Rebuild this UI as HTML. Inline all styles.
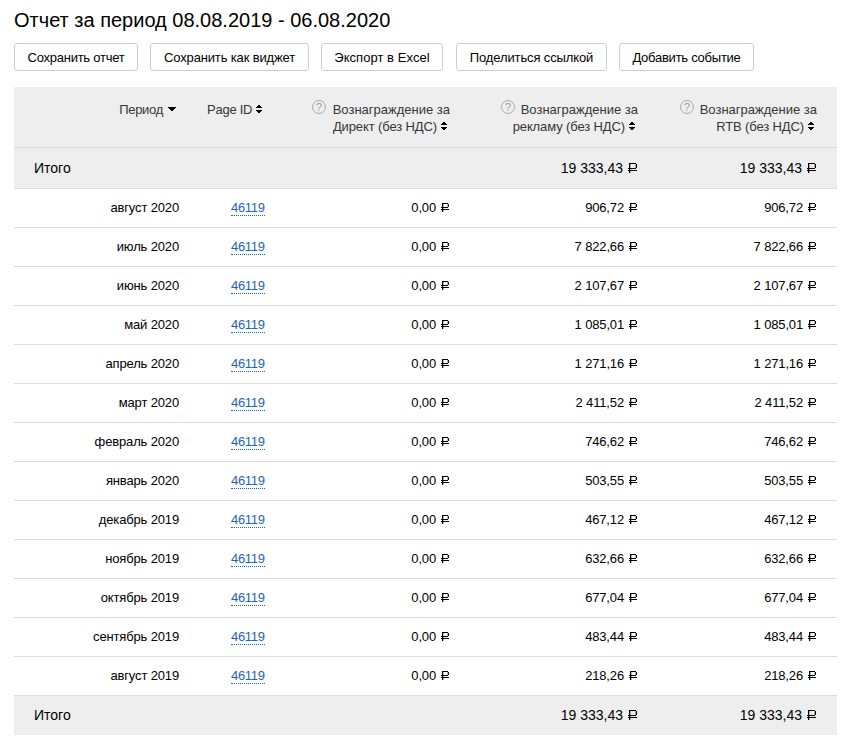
<!DOCTYPE html><html><head><meta charset="utf-8"><style>
*{box-sizing:border-box}
html,body{margin:0;padding:0;background:#fff;width:845px;height:745px;overflow:hidden}
body{font-family:"Liberation Sans",sans-serif;color:#000;position:relative}
h1{position:absolute;left:14px;top:8px;margin:0;font-size:20px;font-weight:normal;line-height:24px;white-space:nowrap}
.btn{position:absolute;top:43px;height:28px;border:1px solid #cfcfcf;border-radius:3px;background:#fff;font-size:13px;line-height:28px;text-align:center;white-space:nowrap;letter-spacing:-0.2px}
.tbl{position:absolute;left:14px;top:87px;width:823px}
.row{position:absolute;left:0;width:823px;border-bottom:1px solid #dcdcdc}
.hd{top:0;height:61px;background:#eee}
.tot{background:#eee}
.c{position:absolute;white-space:nowrap;font-size:13px;line-height:18px;letter-spacing:-0.15px}
.h{color:#363636;line-height:17px;top:14px;text-align:right;letter-spacing:0px}
.tri{display:inline-block;width:8px;height:4px;margin-left:5px;margin-right:0px;vertical-align:baseline;position:relative;top:-3px}
.sort{display:inline-block;width:6px;height:8px;position:relative;margin-left:4px;margin-right:3px;vertical-align:baseline;top:-1px}
.q{position:absolute;width:14px;height:14px}
a{letter-spacing:-0.3px;color:#1c64b8;text-decoration:none;border-bottom:1px dotted #1c64b8}
.rub{vertical-align:baseline}
i.sp{display:inline-block;width:5px}
</style></head><body>
<h1>Отчет за период 08.08.2019 - 06.08.2020</h1>
<div class="btn" style="left:14px;width:124px;letter-spacing:-0.25px">Сохранить отчет</div>
<div class="btn" style="left:150px;width:159px;letter-spacing:-0.15px">Сохранить как виджет</div>
<div class="btn" style="left:321px;width:122px;letter-spacing:0.05px">Экспорт в Excel</div>
<div class="btn" style="left:456px;width:151px;letter-spacing:-0.12px">Поделиться ссылкой</div>
<div class="btn" style="left:619px;width:135px;letter-spacing:-0.25px">Добавить событие</div>
<div class="tbl">
<div class="row hd">
<div class="c h" style="right:661px;letter-spacing:-0.3px">Период<svg class="tri" viewBox="0 0 8 4" shape-rendering="crispEdges"><path d="M0 0h8v1h-8zM1 1h6v1h-6zM2 2h4v1h-4zM3 3h2v1h-2z" fill="#000"/></svg></div>
<div class="c h" style="left:193px;text-align:left;letter-spacing:-0.25px">Page ID<svg class="sort" viewBox="0 0 6 8" shape-rendering="crispEdges"><path d="M2 0h2v1h-2zM1 1h4v1h-4zM0 2h6v1h-6zM0 5h6v1h-6zM1 6h4v1h-4zM2 7h2v1h-2z" fill="#000"/></svg></div>
<div class="q" style="left:298px;top:13px"><svg width="14" height="14" viewBox="0 0 14 14"><circle cx="7" cy="7" r="6.5" fill="none" stroke="#a9a9a9" stroke-width="1"/><text x="7" y="11" text-anchor="middle" font-family="Liberation Sans" font-size="11" fill="#9c9c9c">?</text></svg></div>
<div class="c h" style="right:387px">Вознаграждение за<br><span style="letter-spacing:-0.12px">Директ (без НДС)</span><svg class="sort" viewBox="0 0 6 8" shape-rendering="crispEdges"><path d="M2 0h2v1h-2zM1 1h4v1h-4zM0 2h6v1h-6zM0 5h6v1h-6zM1 6h4v1h-4zM2 7h2v1h-2z" fill="#000"/></svg></div>
<div class="q" style="left:487px;top:13px"><svg width="14" height="14" viewBox="0 0 14 14"><circle cx="7" cy="7" r="6.5" fill="none" stroke="#a9a9a9" stroke-width="1"/><text x="7" y="11" text-anchor="middle" font-family="Liberation Sans" font-size="11" fill="#9c9c9c">?</text></svg></div>
<div class="c h" style="right:199px">Вознаграждение за<br><span style="letter-spacing:-0.12px">рекламу (без НДС)</span><svg class="sort" viewBox="0 0 6 8" shape-rendering="crispEdges"><path d="M2 0h2v1h-2zM1 1h4v1h-4zM0 2h6v1h-6zM0 5h6v1h-6zM1 6h4v1h-4zM2 7h2v1h-2z" fill="#000"/></svg></div>
<div class="q" style="left:666px;top:13px"><svg width="14" height="14" viewBox="0 0 14 14"><circle cx="7" cy="7" r="6.5" fill="none" stroke="#a9a9a9" stroke-width="1"/><text x="7" y="11" text-anchor="middle" font-family="Liberation Sans" font-size="11" fill="#9c9c9c">?</text></svg></div>
<div class="c h" style="right:20px">Вознаграждение за<br><span style="letter-spacing:-0.12px">RTB (без НДС)</span><svg class="sort" viewBox="0 0 6 8" shape-rendering="crispEdges"><path d="M2 0h2v1h-2zM1 1h4v1h-4zM0 2h6v1h-6zM0 5h6v1h-6zM1 6h4v1h-4zM2 7h2v1h-2z" fill="#000"/></svg></div>
</div>
<div class="row tot" style="top:61px;height:41px;"><div class="c" style="left:20px;top:11px;font-size:14px;letter-spacing:0">Итого</div><div class="c" style="right:200px;top:11px;font-size:14px;letter-spacing:0">19 333,43<i class="sp"></i><svg class="rub" width="9" height="10" viewBox="0 0 9 10" shape-rendering="crispEdges"><path d="M1 0h7v1h-7zM8 1h1v4h-1zM0 5h8v1h-8zM0 7h9v1h-9zM1 0h1v10h-1z" fill="#000"/><path d="M2 1h1v4h-1zM7 1h1v4h-1zM2 6h1v1h-1zM2 8h1v2h-1z" fill="#000" fill-opacity="0.3"/></svg></div><div class="c" style="right:21px;top:11px;font-size:14px;letter-spacing:0">19 333,43<i class="sp"></i><svg class="rub" width="9" height="10" viewBox="0 0 9 10" shape-rendering="crispEdges"><path d="M1 0h7v1h-7zM8 1h1v4h-1zM0 5h8v1h-8zM0 7h9v1h-9zM1 0h1v10h-1z" fill="#000"/><path d="M2 1h1v4h-1zM7 1h1v4h-1zM2 6h1v1h-1zM2 8h1v2h-1z" fill="#000" fill-opacity="0.3"/></svg></div></div>
<div class="row" style="top:102px;height:39px"><div class="c" style="right:658px;top:10px">август 2020</div><div class="c" style="left:217px;top:10px"><a>46119</a></div><div class="c" style="right:388px;top:10px">0,00<i class="sp"></i><svg class="rub" width="8" height="9" viewBox="0 0 8 9" shape-rendering="crispEdges"><path d="M1 0h6v1h-6zM7 1h1v3h-1zM0 4h7v1h-7zM0 6h8v1h-8zM1 0h1v9h-1z" fill="#000"/><path d="M2 1h1v3h-1zM6 1h1v3h-1zM2 5h1v1h-1zM2 7h1v2h-1z" fill="#000" fill-opacity="0.3"/></svg></div><div class="c" style="right:200px;top:10px">906,72<i class="sp"></i><svg class="rub" width="8" height="9" viewBox="0 0 8 9" shape-rendering="crispEdges"><path d="M1 0h6v1h-6zM7 1h1v3h-1zM0 4h7v1h-7zM0 6h8v1h-8zM1 0h1v9h-1z" fill="#000"/><path d="M2 1h1v3h-1zM6 1h1v3h-1zM2 5h1v1h-1zM2 7h1v2h-1z" fill="#000" fill-opacity="0.3"/></svg></div><div class="c" style="right:21px;top:10px">906,72<i class="sp"></i><svg class="rub" width="8" height="9" viewBox="0 0 8 9" shape-rendering="crispEdges"><path d="M1 0h6v1h-6zM7 1h1v3h-1zM0 4h7v1h-7zM0 6h8v1h-8zM1 0h1v9h-1z" fill="#000"/><path d="M2 1h1v3h-1zM6 1h1v3h-1zM2 5h1v1h-1zM2 7h1v2h-1z" fill="#000" fill-opacity="0.3"/></svg></div></div>
<div class="row" style="top:141px;height:39px"><div class="c" style="right:658px;top:10px">июль 2020</div><div class="c" style="left:217px;top:10px"><a>46119</a></div><div class="c" style="right:388px;top:10px">0,00<i class="sp"></i><svg class="rub" width="8" height="9" viewBox="0 0 8 9" shape-rendering="crispEdges"><path d="M1 0h6v1h-6zM7 1h1v3h-1zM0 4h7v1h-7zM0 6h8v1h-8zM1 0h1v9h-1z" fill="#000"/><path d="M2 1h1v3h-1zM6 1h1v3h-1zM2 5h1v1h-1zM2 7h1v2h-1z" fill="#000" fill-opacity="0.3"/></svg></div><div class="c" style="right:200px;top:10px">7 822,66<i class="sp"></i><svg class="rub" width="8" height="9" viewBox="0 0 8 9" shape-rendering="crispEdges"><path d="M1 0h6v1h-6zM7 1h1v3h-1zM0 4h7v1h-7zM0 6h8v1h-8zM1 0h1v9h-1z" fill="#000"/><path d="M2 1h1v3h-1zM6 1h1v3h-1zM2 5h1v1h-1zM2 7h1v2h-1z" fill="#000" fill-opacity="0.3"/></svg></div><div class="c" style="right:21px;top:10px">7 822,66<i class="sp"></i><svg class="rub" width="8" height="9" viewBox="0 0 8 9" shape-rendering="crispEdges"><path d="M1 0h6v1h-6zM7 1h1v3h-1zM0 4h7v1h-7zM0 6h8v1h-8zM1 0h1v9h-1z" fill="#000"/><path d="M2 1h1v3h-1zM6 1h1v3h-1zM2 5h1v1h-1zM2 7h1v2h-1z" fill="#000" fill-opacity="0.3"/></svg></div></div>
<div class="row" style="top:180px;height:39px"><div class="c" style="right:658px;top:10px">июнь 2020</div><div class="c" style="left:217px;top:10px"><a>46119</a></div><div class="c" style="right:388px;top:10px">0,00<i class="sp"></i><svg class="rub" width="8" height="9" viewBox="0 0 8 9" shape-rendering="crispEdges"><path d="M1 0h6v1h-6zM7 1h1v3h-1zM0 4h7v1h-7zM0 6h8v1h-8zM1 0h1v9h-1z" fill="#000"/><path d="M2 1h1v3h-1zM6 1h1v3h-1zM2 5h1v1h-1zM2 7h1v2h-1z" fill="#000" fill-opacity="0.3"/></svg></div><div class="c" style="right:200px;top:10px">2 107,67<i class="sp"></i><svg class="rub" width="8" height="9" viewBox="0 0 8 9" shape-rendering="crispEdges"><path d="M1 0h6v1h-6zM7 1h1v3h-1zM0 4h7v1h-7zM0 6h8v1h-8zM1 0h1v9h-1z" fill="#000"/><path d="M2 1h1v3h-1zM6 1h1v3h-1zM2 5h1v1h-1zM2 7h1v2h-1z" fill="#000" fill-opacity="0.3"/></svg></div><div class="c" style="right:21px;top:10px">2 107,67<i class="sp"></i><svg class="rub" width="8" height="9" viewBox="0 0 8 9" shape-rendering="crispEdges"><path d="M1 0h6v1h-6zM7 1h1v3h-1zM0 4h7v1h-7zM0 6h8v1h-8zM1 0h1v9h-1z" fill="#000"/><path d="M2 1h1v3h-1zM6 1h1v3h-1zM2 5h1v1h-1zM2 7h1v2h-1z" fill="#000" fill-opacity="0.3"/></svg></div></div>
<div class="row" style="top:219px;height:39px"><div class="c" style="right:658px;top:10px">май 2020</div><div class="c" style="left:217px;top:10px"><a>46119</a></div><div class="c" style="right:388px;top:10px">0,00<i class="sp"></i><svg class="rub" width="8" height="9" viewBox="0 0 8 9" shape-rendering="crispEdges"><path d="M1 0h6v1h-6zM7 1h1v3h-1zM0 4h7v1h-7zM0 6h8v1h-8zM1 0h1v9h-1z" fill="#000"/><path d="M2 1h1v3h-1zM6 1h1v3h-1zM2 5h1v1h-1zM2 7h1v2h-1z" fill="#000" fill-opacity="0.3"/></svg></div><div class="c" style="right:200px;top:10px">1 085,01<i class="sp"></i><svg class="rub" width="8" height="9" viewBox="0 0 8 9" shape-rendering="crispEdges"><path d="M1 0h6v1h-6zM7 1h1v3h-1zM0 4h7v1h-7zM0 6h8v1h-8zM1 0h1v9h-1z" fill="#000"/><path d="M2 1h1v3h-1zM6 1h1v3h-1zM2 5h1v1h-1zM2 7h1v2h-1z" fill="#000" fill-opacity="0.3"/></svg></div><div class="c" style="right:21px;top:10px">1 085,01<i class="sp"></i><svg class="rub" width="8" height="9" viewBox="0 0 8 9" shape-rendering="crispEdges"><path d="M1 0h6v1h-6zM7 1h1v3h-1zM0 4h7v1h-7zM0 6h8v1h-8zM1 0h1v9h-1z" fill="#000"/><path d="M2 1h1v3h-1zM6 1h1v3h-1zM2 5h1v1h-1zM2 7h1v2h-1z" fill="#000" fill-opacity="0.3"/></svg></div></div>
<div class="row" style="top:258px;height:39px"><div class="c" style="right:658px;top:10px">апрель 2020</div><div class="c" style="left:217px;top:10px"><a>46119</a></div><div class="c" style="right:388px;top:10px">0,00<i class="sp"></i><svg class="rub" width="8" height="9" viewBox="0 0 8 9" shape-rendering="crispEdges"><path d="M1 0h6v1h-6zM7 1h1v3h-1zM0 4h7v1h-7zM0 6h8v1h-8zM1 0h1v9h-1z" fill="#000"/><path d="M2 1h1v3h-1zM6 1h1v3h-1zM2 5h1v1h-1zM2 7h1v2h-1z" fill="#000" fill-opacity="0.3"/></svg></div><div class="c" style="right:200px;top:10px">1 271,16<i class="sp"></i><svg class="rub" width="8" height="9" viewBox="0 0 8 9" shape-rendering="crispEdges"><path d="M1 0h6v1h-6zM7 1h1v3h-1zM0 4h7v1h-7zM0 6h8v1h-8zM1 0h1v9h-1z" fill="#000"/><path d="M2 1h1v3h-1zM6 1h1v3h-1zM2 5h1v1h-1zM2 7h1v2h-1z" fill="#000" fill-opacity="0.3"/></svg></div><div class="c" style="right:21px;top:10px">1 271,16<i class="sp"></i><svg class="rub" width="8" height="9" viewBox="0 0 8 9" shape-rendering="crispEdges"><path d="M1 0h6v1h-6zM7 1h1v3h-1zM0 4h7v1h-7zM0 6h8v1h-8zM1 0h1v9h-1z" fill="#000"/><path d="M2 1h1v3h-1zM6 1h1v3h-1zM2 5h1v1h-1zM2 7h1v2h-1z" fill="#000" fill-opacity="0.3"/></svg></div></div>
<div class="row" style="top:297px;height:39px"><div class="c" style="right:658px;top:10px">март 2020</div><div class="c" style="left:217px;top:10px"><a>46119</a></div><div class="c" style="right:388px;top:10px">0,00<i class="sp"></i><svg class="rub" width="8" height="9" viewBox="0 0 8 9" shape-rendering="crispEdges"><path d="M1 0h6v1h-6zM7 1h1v3h-1zM0 4h7v1h-7zM0 6h8v1h-8zM1 0h1v9h-1z" fill="#000"/><path d="M2 1h1v3h-1zM6 1h1v3h-1zM2 5h1v1h-1zM2 7h1v2h-1z" fill="#000" fill-opacity="0.3"/></svg></div><div class="c" style="right:200px;top:10px">2 411,52<i class="sp"></i><svg class="rub" width="8" height="9" viewBox="0 0 8 9" shape-rendering="crispEdges"><path d="M1 0h6v1h-6zM7 1h1v3h-1zM0 4h7v1h-7zM0 6h8v1h-8zM1 0h1v9h-1z" fill="#000"/><path d="M2 1h1v3h-1zM6 1h1v3h-1zM2 5h1v1h-1zM2 7h1v2h-1z" fill="#000" fill-opacity="0.3"/></svg></div><div class="c" style="right:21px;top:10px">2 411,52<i class="sp"></i><svg class="rub" width="8" height="9" viewBox="0 0 8 9" shape-rendering="crispEdges"><path d="M1 0h6v1h-6zM7 1h1v3h-1zM0 4h7v1h-7zM0 6h8v1h-8zM1 0h1v9h-1z" fill="#000"/><path d="M2 1h1v3h-1zM6 1h1v3h-1zM2 5h1v1h-1zM2 7h1v2h-1z" fill="#000" fill-opacity="0.3"/></svg></div></div>
<div class="row" style="top:336px;height:39px"><div class="c" style="right:658px;top:10px">февраль 2020</div><div class="c" style="left:217px;top:10px"><a>46119</a></div><div class="c" style="right:388px;top:10px">0,00<i class="sp"></i><svg class="rub" width="8" height="9" viewBox="0 0 8 9" shape-rendering="crispEdges"><path d="M1 0h6v1h-6zM7 1h1v3h-1zM0 4h7v1h-7zM0 6h8v1h-8zM1 0h1v9h-1z" fill="#000"/><path d="M2 1h1v3h-1zM6 1h1v3h-1zM2 5h1v1h-1zM2 7h1v2h-1z" fill="#000" fill-opacity="0.3"/></svg></div><div class="c" style="right:200px;top:10px">746,62<i class="sp"></i><svg class="rub" width="8" height="9" viewBox="0 0 8 9" shape-rendering="crispEdges"><path d="M1 0h6v1h-6zM7 1h1v3h-1zM0 4h7v1h-7zM0 6h8v1h-8zM1 0h1v9h-1z" fill="#000"/><path d="M2 1h1v3h-1zM6 1h1v3h-1zM2 5h1v1h-1zM2 7h1v2h-1z" fill="#000" fill-opacity="0.3"/></svg></div><div class="c" style="right:21px;top:10px">746,62<i class="sp"></i><svg class="rub" width="8" height="9" viewBox="0 0 8 9" shape-rendering="crispEdges"><path d="M1 0h6v1h-6zM7 1h1v3h-1zM0 4h7v1h-7zM0 6h8v1h-8zM1 0h1v9h-1z" fill="#000"/><path d="M2 1h1v3h-1zM6 1h1v3h-1zM2 5h1v1h-1zM2 7h1v2h-1z" fill="#000" fill-opacity="0.3"/></svg></div></div>
<div class="row" style="top:375px;height:39px"><div class="c" style="right:658px;top:10px">январь 2020</div><div class="c" style="left:217px;top:10px"><a>46119</a></div><div class="c" style="right:388px;top:10px">0,00<i class="sp"></i><svg class="rub" width="8" height="9" viewBox="0 0 8 9" shape-rendering="crispEdges"><path d="M1 0h6v1h-6zM7 1h1v3h-1zM0 4h7v1h-7zM0 6h8v1h-8zM1 0h1v9h-1z" fill="#000"/><path d="M2 1h1v3h-1zM6 1h1v3h-1zM2 5h1v1h-1zM2 7h1v2h-1z" fill="#000" fill-opacity="0.3"/></svg></div><div class="c" style="right:200px;top:10px">503,55<i class="sp"></i><svg class="rub" width="8" height="9" viewBox="0 0 8 9" shape-rendering="crispEdges"><path d="M1 0h6v1h-6zM7 1h1v3h-1zM0 4h7v1h-7zM0 6h8v1h-8zM1 0h1v9h-1z" fill="#000"/><path d="M2 1h1v3h-1zM6 1h1v3h-1zM2 5h1v1h-1zM2 7h1v2h-1z" fill="#000" fill-opacity="0.3"/></svg></div><div class="c" style="right:21px;top:10px">503,55<i class="sp"></i><svg class="rub" width="8" height="9" viewBox="0 0 8 9" shape-rendering="crispEdges"><path d="M1 0h6v1h-6zM7 1h1v3h-1zM0 4h7v1h-7zM0 6h8v1h-8zM1 0h1v9h-1z" fill="#000"/><path d="M2 1h1v3h-1zM6 1h1v3h-1zM2 5h1v1h-1zM2 7h1v2h-1z" fill="#000" fill-opacity="0.3"/></svg></div></div>
<div class="row" style="top:414px;height:39px"><div class="c" style="right:658px;top:10px">декабрь 2019</div><div class="c" style="left:217px;top:10px"><a>46119</a></div><div class="c" style="right:388px;top:10px">0,00<i class="sp"></i><svg class="rub" width="8" height="9" viewBox="0 0 8 9" shape-rendering="crispEdges"><path d="M1 0h6v1h-6zM7 1h1v3h-1zM0 4h7v1h-7zM0 6h8v1h-8zM1 0h1v9h-1z" fill="#000"/><path d="M2 1h1v3h-1zM6 1h1v3h-1zM2 5h1v1h-1zM2 7h1v2h-1z" fill="#000" fill-opacity="0.3"/></svg></div><div class="c" style="right:200px;top:10px">467,12<i class="sp"></i><svg class="rub" width="8" height="9" viewBox="0 0 8 9" shape-rendering="crispEdges"><path d="M1 0h6v1h-6zM7 1h1v3h-1zM0 4h7v1h-7zM0 6h8v1h-8zM1 0h1v9h-1z" fill="#000"/><path d="M2 1h1v3h-1zM6 1h1v3h-1zM2 5h1v1h-1zM2 7h1v2h-1z" fill="#000" fill-opacity="0.3"/></svg></div><div class="c" style="right:21px;top:10px">467,12<i class="sp"></i><svg class="rub" width="8" height="9" viewBox="0 0 8 9" shape-rendering="crispEdges"><path d="M1 0h6v1h-6zM7 1h1v3h-1zM0 4h7v1h-7zM0 6h8v1h-8zM1 0h1v9h-1z" fill="#000"/><path d="M2 1h1v3h-1zM6 1h1v3h-1zM2 5h1v1h-1zM2 7h1v2h-1z" fill="#000" fill-opacity="0.3"/></svg></div></div>
<div class="row" style="top:453px;height:39px"><div class="c" style="right:658px;top:10px">ноябрь 2019</div><div class="c" style="left:217px;top:10px"><a>46119</a></div><div class="c" style="right:388px;top:10px">0,00<i class="sp"></i><svg class="rub" width="8" height="9" viewBox="0 0 8 9" shape-rendering="crispEdges"><path d="M1 0h6v1h-6zM7 1h1v3h-1zM0 4h7v1h-7zM0 6h8v1h-8zM1 0h1v9h-1z" fill="#000"/><path d="M2 1h1v3h-1zM6 1h1v3h-1zM2 5h1v1h-1zM2 7h1v2h-1z" fill="#000" fill-opacity="0.3"/></svg></div><div class="c" style="right:200px;top:10px">632,66<i class="sp"></i><svg class="rub" width="8" height="9" viewBox="0 0 8 9" shape-rendering="crispEdges"><path d="M1 0h6v1h-6zM7 1h1v3h-1zM0 4h7v1h-7zM0 6h8v1h-8zM1 0h1v9h-1z" fill="#000"/><path d="M2 1h1v3h-1zM6 1h1v3h-1zM2 5h1v1h-1zM2 7h1v2h-1z" fill="#000" fill-opacity="0.3"/></svg></div><div class="c" style="right:21px;top:10px">632,66<i class="sp"></i><svg class="rub" width="8" height="9" viewBox="0 0 8 9" shape-rendering="crispEdges"><path d="M1 0h6v1h-6zM7 1h1v3h-1zM0 4h7v1h-7zM0 6h8v1h-8zM1 0h1v9h-1z" fill="#000"/><path d="M2 1h1v3h-1zM6 1h1v3h-1zM2 5h1v1h-1zM2 7h1v2h-1z" fill="#000" fill-opacity="0.3"/></svg></div></div>
<div class="row" style="top:492px;height:39px"><div class="c" style="right:658px;top:10px">октябрь 2019</div><div class="c" style="left:217px;top:10px"><a>46119</a></div><div class="c" style="right:388px;top:10px">0,00<i class="sp"></i><svg class="rub" width="8" height="9" viewBox="0 0 8 9" shape-rendering="crispEdges"><path d="M1 0h6v1h-6zM7 1h1v3h-1zM0 4h7v1h-7zM0 6h8v1h-8zM1 0h1v9h-1z" fill="#000"/><path d="M2 1h1v3h-1zM6 1h1v3h-1zM2 5h1v1h-1zM2 7h1v2h-1z" fill="#000" fill-opacity="0.3"/></svg></div><div class="c" style="right:200px;top:10px">677,04<i class="sp"></i><svg class="rub" width="8" height="9" viewBox="0 0 8 9" shape-rendering="crispEdges"><path d="M1 0h6v1h-6zM7 1h1v3h-1zM0 4h7v1h-7zM0 6h8v1h-8zM1 0h1v9h-1z" fill="#000"/><path d="M2 1h1v3h-1zM6 1h1v3h-1zM2 5h1v1h-1zM2 7h1v2h-1z" fill="#000" fill-opacity="0.3"/></svg></div><div class="c" style="right:21px;top:10px">677,04<i class="sp"></i><svg class="rub" width="8" height="9" viewBox="0 0 8 9" shape-rendering="crispEdges"><path d="M1 0h6v1h-6zM7 1h1v3h-1zM0 4h7v1h-7zM0 6h8v1h-8zM1 0h1v9h-1z" fill="#000"/><path d="M2 1h1v3h-1zM6 1h1v3h-1zM2 5h1v1h-1zM2 7h1v2h-1z" fill="#000" fill-opacity="0.3"/></svg></div></div>
<div class="row" style="top:531px;height:39px"><div class="c" style="right:658px;top:10px">сентябрь 2019</div><div class="c" style="left:217px;top:10px"><a>46119</a></div><div class="c" style="right:388px;top:10px">0,00<i class="sp"></i><svg class="rub" width="8" height="9" viewBox="0 0 8 9" shape-rendering="crispEdges"><path d="M1 0h6v1h-6zM7 1h1v3h-1zM0 4h7v1h-7zM0 6h8v1h-8zM1 0h1v9h-1z" fill="#000"/><path d="M2 1h1v3h-1zM6 1h1v3h-1zM2 5h1v1h-1zM2 7h1v2h-1z" fill="#000" fill-opacity="0.3"/></svg></div><div class="c" style="right:200px;top:10px">483,44<i class="sp"></i><svg class="rub" width="8" height="9" viewBox="0 0 8 9" shape-rendering="crispEdges"><path d="M1 0h6v1h-6zM7 1h1v3h-1zM0 4h7v1h-7zM0 6h8v1h-8zM1 0h1v9h-1z" fill="#000"/><path d="M2 1h1v3h-1zM6 1h1v3h-1zM2 5h1v1h-1zM2 7h1v2h-1z" fill="#000" fill-opacity="0.3"/></svg></div><div class="c" style="right:21px;top:10px">483,44<i class="sp"></i><svg class="rub" width="8" height="9" viewBox="0 0 8 9" shape-rendering="crispEdges"><path d="M1 0h6v1h-6zM7 1h1v3h-1zM0 4h7v1h-7zM0 6h8v1h-8zM1 0h1v9h-1z" fill="#000"/><path d="M2 1h1v3h-1zM6 1h1v3h-1zM2 5h1v1h-1zM2 7h1v2h-1z" fill="#000" fill-opacity="0.3"/></svg></div></div>
<div class="row" style="top:570px;height:39px"><div class="c" style="right:658px;top:10px">август 2019</div><div class="c" style="left:217px;top:10px"><a>46119</a></div><div class="c" style="right:388px;top:10px">0,00<i class="sp"></i><svg class="rub" width="8" height="9" viewBox="0 0 8 9" shape-rendering="crispEdges"><path d="M1 0h6v1h-6zM7 1h1v3h-1zM0 4h7v1h-7zM0 6h8v1h-8zM1 0h1v9h-1z" fill="#000"/><path d="M2 1h1v3h-1zM6 1h1v3h-1zM2 5h1v1h-1zM2 7h1v2h-1z" fill="#000" fill-opacity="0.3"/></svg></div><div class="c" style="right:200px;top:10px">218,26<i class="sp"></i><svg class="rub" width="8" height="9" viewBox="0 0 8 9" shape-rendering="crispEdges"><path d="M1 0h6v1h-6zM7 1h1v3h-1zM0 4h7v1h-7zM0 6h8v1h-8zM1 0h1v9h-1z" fill="#000"/><path d="M2 1h1v3h-1zM6 1h1v3h-1zM2 5h1v1h-1zM2 7h1v2h-1z" fill="#000" fill-opacity="0.3"/></svg></div><div class="c" style="right:21px;top:10px">218,26<i class="sp"></i><svg class="rub" width="8" height="9" viewBox="0 0 8 9" shape-rendering="crispEdges"><path d="M1 0h6v1h-6zM7 1h1v3h-1zM0 4h7v1h-7zM0 6h8v1h-8zM1 0h1v9h-1z" fill="#000"/><path d="M2 1h1v3h-1zM6 1h1v3h-1zM2 5h1v1h-1zM2 7h1v2h-1z" fill="#000" fill-opacity="0.3"/></svg></div></div>
<div class="row tot" style="top:609px;height:39px;border-bottom:0;"><div class="c" style="left:20px;top:10px;font-size:14px;letter-spacing:0">Итого</div><div class="c" style="right:200px;top:10px;font-size:14px;letter-spacing:0">19 333,43<i class="sp"></i><svg class="rub" width="9" height="10" viewBox="0 0 9 10" shape-rendering="crispEdges"><path d="M1 0h7v1h-7zM8 1h1v4h-1zM0 5h8v1h-8zM0 7h9v1h-9zM1 0h1v10h-1z" fill="#000"/><path d="M2 1h1v4h-1zM7 1h1v4h-1zM2 6h1v1h-1zM2 8h1v2h-1z" fill="#000" fill-opacity="0.3"/></svg></div><div class="c" style="right:21px;top:10px;font-size:14px;letter-spacing:0">19 333,43<i class="sp"></i><svg class="rub" width="9" height="10" viewBox="0 0 9 10" shape-rendering="crispEdges"><path d="M1 0h7v1h-7zM8 1h1v4h-1zM0 5h8v1h-8zM0 7h9v1h-9zM1 0h1v10h-1z" fill="#000"/><path d="M2 1h1v4h-1zM7 1h1v4h-1zM2 6h1v1h-1zM2 8h1v2h-1z" fill="#000" fill-opacity="0.3"/></svg></div></div>
</div></body></html>
